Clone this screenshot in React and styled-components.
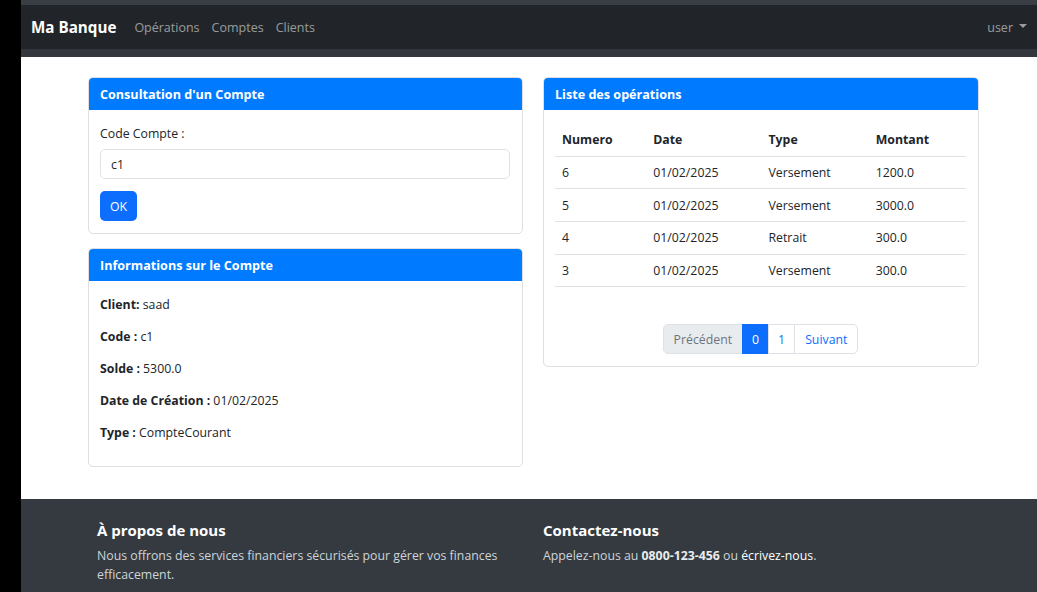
import React from 'react';
import styled, { createGlobalStyle } from 'styled-components';

const GlobalStyle = createGlobalStyle`
  * { box-sizing: border-box; }
  body {
    margin: 0;
    background: #000;
    font-family: "Open Sans", "Noto Sans", sans-serif;
    font-size: 12.3px;
    line-height: 19px;
    color: #212529;
  }
`;

const Shell = styled.div`
  display: flex;
  min-height: 100vh;
`;

const Strip = styled.div`
  width: 21px;
  flex-shrink: 0;
  background: #000;
`;

const Page = styled.div`
  flex: 1;
  display: flex;
  flex-direction: column;
  background: #fff;
`;

const Navbar = styled.nav`
  height: 57px;
  display: flex;
  align-items: center;
  padding: 1px 10px 0;
  background: #212529;
  border-top: 5px solid #393d44;
  border-bottom: 8px solid #33373d;
`;

const Brand = styled.a`
  color: #fff;
  font-weight: 700;
  font-size: 15.2px;
  margin-right: 18px;
  text-decoration: none;
`;

const NavLink = styled.a`
  color: rgba(255, 255, 255, 0.55);
  font-size: 12.5px;
  margin-right: 12px;
  text-decoration: none;
`;

const UserMenu = styled.div`
  margin-left: auto;
  display: flex;
  align-items: center;
  gap: 6px;
  color: rgba(255, 255, 255, 0.55);
  font-size: 12.5px;
  &::after {
    content: '';
    border-top: 4px solid rgba(255, 255, 255, 0.55);
    border-left: 4px solid transparent;
    border-right: 4px solid transparent;
    margin-top: -3px;
  }
`;

const Main = styled.main`
  flex: 1;
  padding: 20px 0 32px 67px;
  display: grid;
  grid-template-columns: 435px 436px;
  column-gap: 20px;
  align-items: start;
`;

const Column = styled.div`
  display: flex;
  flex-direction: column;
  gap: 14px;
`;

const Card = styled.div`
  border: 1px solid #dfdfdf;
  border-radius: 5px;
  overflow: hidden;
  background: #fff;
`;

const CardHeader = styled.div`
  height: 32px;
  display: flex;
  align-items: center;
  padding: 1px 11px 0;
  background: #007bff;
  color: #fff;
  font-weight: 700;
  font-size: 12.6px;
`;

const CardBody = styled.div`
  padding: 14px 12px ${p => p.$pb || 12}px 11px;
`;

const Label = styled.label`
  display: block;
  margin-bottom: 6px;
`;

const Input = styled.input`
  display: block;
  width: 100%;
  height: 30px;
  padding: 0 10px;
  border: 1px solid #dee2e6;
  border-radius: 5px;
  font: inherit;
  color: #212529;
  outline: none;
`;

const Button = styled.button`
  margin-top: 12px;
  height: 30px;
  padding: 0 10px;
  border: none;
  border-radius: 5px;
  background: #0d6efd;
  color: #fff;
  font: inherit;
`;

const Info = styled.p`
  margin: 0 0 13px;
  b { font-weight: 700; }
`;

const Table = styled.table`
  width: 100%;
  border-collapse: collapse;
  table-layout: fixed;
  margin-top: -1px;
`;

const Th = styled.th`
  text-align: left;
  font-weight: 700;
  height: 33px;
  padding: 0 7px;
  border-bottom: 1px solid #dee2e6;
  width: ${p => p.$w}px;
`;

const Td = styled.td`
  height: 32.7px;
  padding: 0 7px;
  border-bottom: 1px solid #dee2e6;
`;

const Pagination = styled.ul`
  list-style: none;
  display: flex;
  justify-content: center;
  margin: 37px 0 0;
  padding: 0;
`;

const PageItem = styled.li`
  height: 30px;
  display: flex;
  align-items: center;
  padding: 0 ${p => p.$px || 10}px;
  border: 1px solid ${p => (p.$active ? '#0d6efd' : '#dee2e6')};
  margin-left: -1px;
  background: ${p => (p.$active ? '#0d6efd' : p.$disabled ? '#e9ecef' : '#fff')};
  color: ${p => (p.$active ? '#fff' : p.$disabled ? '#6c757d' : '#0d6efd')};
  &:first-child { border-radius: 5px 0 0 5px; margin-left: 0; }
  &:last-child { border-radius: 0 5px 5px 0; }
`;

const Footer = styled.footer`
  background: #343a40;
  padding: 21px 0 40px 76px;
  display: grid;
  grid-template-columns: 440px 1fr;
  column-gap: 6px;
  color: #ced4da;
`;

const FooterTitle = styled.h5`
  margin: 0 0 5px;
  font-size: 15px;
  font-weight: 700;
  color: #fff;
  line-height: 21px;
`;

const FooterText = styled.p`
  margin: 0;
  b { color: #e9ecef; }
  a { color: #fff; text-decoration: none; }
`;

const operations = [
  { id: 6, date: '01/02/2025', type: 'Versement', amount: '1200.0' },
  { id: 5, date: '01/02/2025', type: 'Versement', amount: '3000.0' },
  { id: 4, date: '01/02/2025', type: 'Retrait', amount: '300.0' },
  { id: 3, date: '01/02/2025', type: 'Versement', amount: '300.0' },
];

export default function App() {
  return (
    <Shell>
      <GlobalStyle />
      <Strip />
      <Page>
        <Navbar>
          <Brand href="#">Ma Banque</Brand>
          <NavLink href="#">Opérations</NavLink>
          <NavLink href="#">Comptes</NavLink>
          <NavLink href="#">Clients</NavLink>
          <UserMenu>user</UserMenu>
        </Navbar>

        <Main>
          <Column>
            <Card>
              <CardHeader>Consultation d'un Compte</CardHeader>
              <CardBody>
                <Label>Code Compte :</Label>
                <Input defaultValue="c1" />
                <Button>OK</Button>
              </CardBody>
            </Card>
            <Card>
              <CardHeader>Informations sur le Compte</CardHeader>
              <CardBody $pb={11}>
                <Info><b>Client:</b> saad</Info>
                <Info><b>Code :</b> c1</Info>
                <Info><b>Solde :</b> 5300.0</Info>
                <Info><b>Date de Création :</b> 01/02/2025</Info>
                <Info><b>Type :</b> CompteCourant</Info>
              </CardBody>
            </Card>
          </Column>

          <Column>
            <Card>
              <CardHeader>Liste des opérations</CardHeader>
              <CardBody>
                <Table>
                  <thead>
                    <tr>
                      <Th $w={91}>Numero</Th>
                      <Th $w={115}>Date</Th>
                      <Th $w={107}>Type</Th>
                      <Th $w={97}>Montant</Th>
                    </tr>
                  </thead>
                  <tbody>
                    {operations.map(op => (
                      <tr key={op.id}>
                        <Td>{op.id}</Td>
                        <Td>{op.date}</Td>
                        <Td>{op.type}</Td>
                        <Td>{op.amount}</Td>
                      </tr>
                    ))}
                  </tbody>
                </Table>
                <Pagination>
                  <PageItem $disabled>Précédent</PageItem>
                  <PageItem $active $px={9}>0</PageItem>
                  <PageItem $px={9}>1</PageItem>
                  <PageItem>Suivant</PageItem>
                </Pagination>
              </CardBody>
            </Card>
          </Column>
        </Main>

        <Footer>
          <div>
            <FooterTitle>À propos de nous</FooterTitle>
            <FooterText>
              Nous offrons des services financiers sécurisés pour gérer vos finances efficacement.
            </FooterText>
          </div>
          <div>
            <FooterTitle>Contactez-nous</FooterTitle>
            <FooterText>
              Appelez-nous au <b>0800-123-456</b> ou <a href="#">écrivez-nous</a>.
            </FooterText>
          </div>
        </Footer>
      </Page>
    </Shell>
  );
}
